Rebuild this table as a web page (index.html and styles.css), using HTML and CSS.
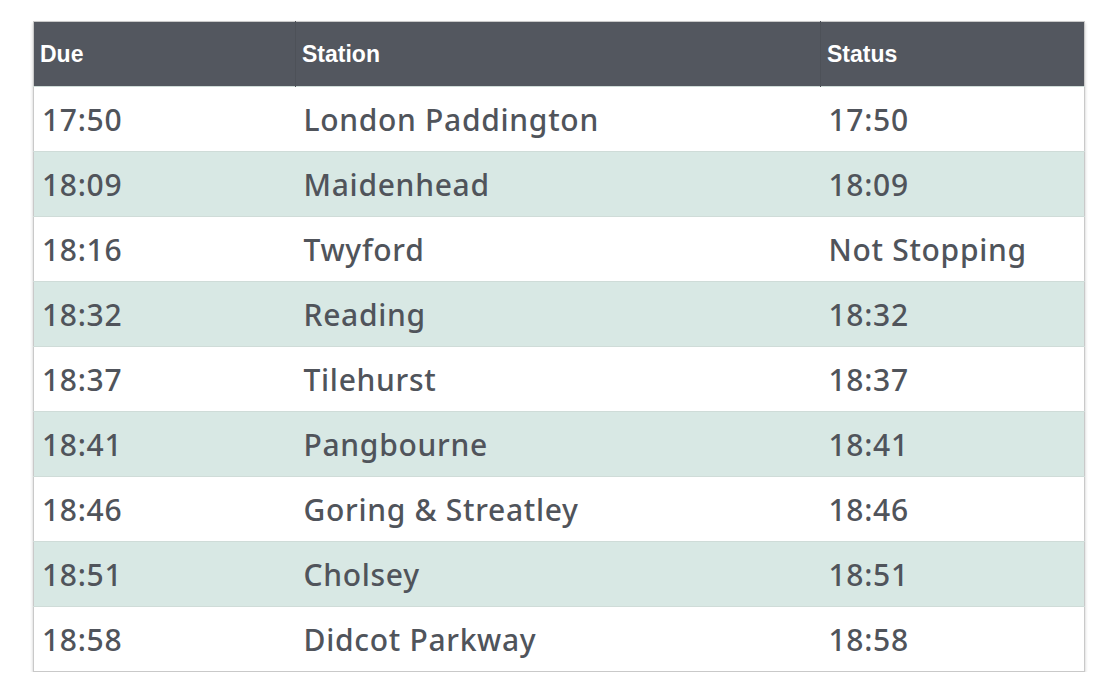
FILE: index.html
```html
<!DOCTYPE html>
<html lang="en">
<head>
<meta charset="utf-8">
<title>Departures</title>
<link rel="stylesheet" href="styles.css">
</head>
<body>
<div class="wrap">
<table class="board">
  <colgroup><col class="c-due"><col class="c-station"><col class="c-status"></colgroup>
  <thead>
    <tr><th>Due</th><th>Station</th><th>Status</th></tr>
  </thead>
  <tbody>
    <tr><td>17:50</td><td>London Paddington</td><td>17:50</td></tr>
    <tr><td>18:09</td><td>Maidenhead</td><td>18:09</td></tr>
    <tr><td>18:16</td><td>Twyford</td><td>Not Stopping</td></tr>
    <tr><td>18:32</td><td>Reading</td><td>18:32</td></tr>
    <tr><td>18:37</td><td>Tilehurst</td><td>18:37</td></tr>
    <tr><td>18:41</td><td>Pangbourne</td><td>18:41</td></tr>
    <tr><td>18:46</td><td>Goring &amp; Streatley</td><td>18:46</td></tr>
    <tr><td>18:51</td><td>Cholsey</td><td>18:51</td></tr>
    <tr><td>18:58</td><td>Didcot Parkway</td><td>18:58</td></tr>
  </tbody>
</table>
</div>
</body>
</html>
```
FILE: styles.css
```css
html, body {
  margin: 0;
  padding: 0;
  background: #ffffff;
}
.wrap {
  padding: 21px 0 0 33px;
}
.board {
  width: 1051px;
  border-collapse: collapse;
  table-layout: fixed;
  border: 1px solid #c9c9c9;
  box-shadow: 0 2px 3px rgba(0,0,0,0.22);
  font-family: "Noto Sans", Lato, sans-serif;
  color: #50545b;
}
.c-due { width: 262px; }
.c-station { width: 525px; }
.c-status { width: 264px; }
.board th {
  background: #53575f;
  color: #ffffff;
  font-family: "Liberation Sans", Arial, sans-serif;
  font-weight: bold;
  font-size: 23px;
  text-align: left;
  height: 64px;
  padding: 0 6px;
  border-left: 1px solid #4d5158;
}
.board th:first-child { border-left: none; }
.board td {
  font-size: 30px;
  font-weight: 500;
  letter-spacing: 0.7px;
  height: 64px;
  padding: 0 8px;
  border-top: 1px solid #cfdcd8;
  white-space: nowrap;
}
.board tbody tr:nth-child(even) td {
  background: #d8e8e4;
}
```
